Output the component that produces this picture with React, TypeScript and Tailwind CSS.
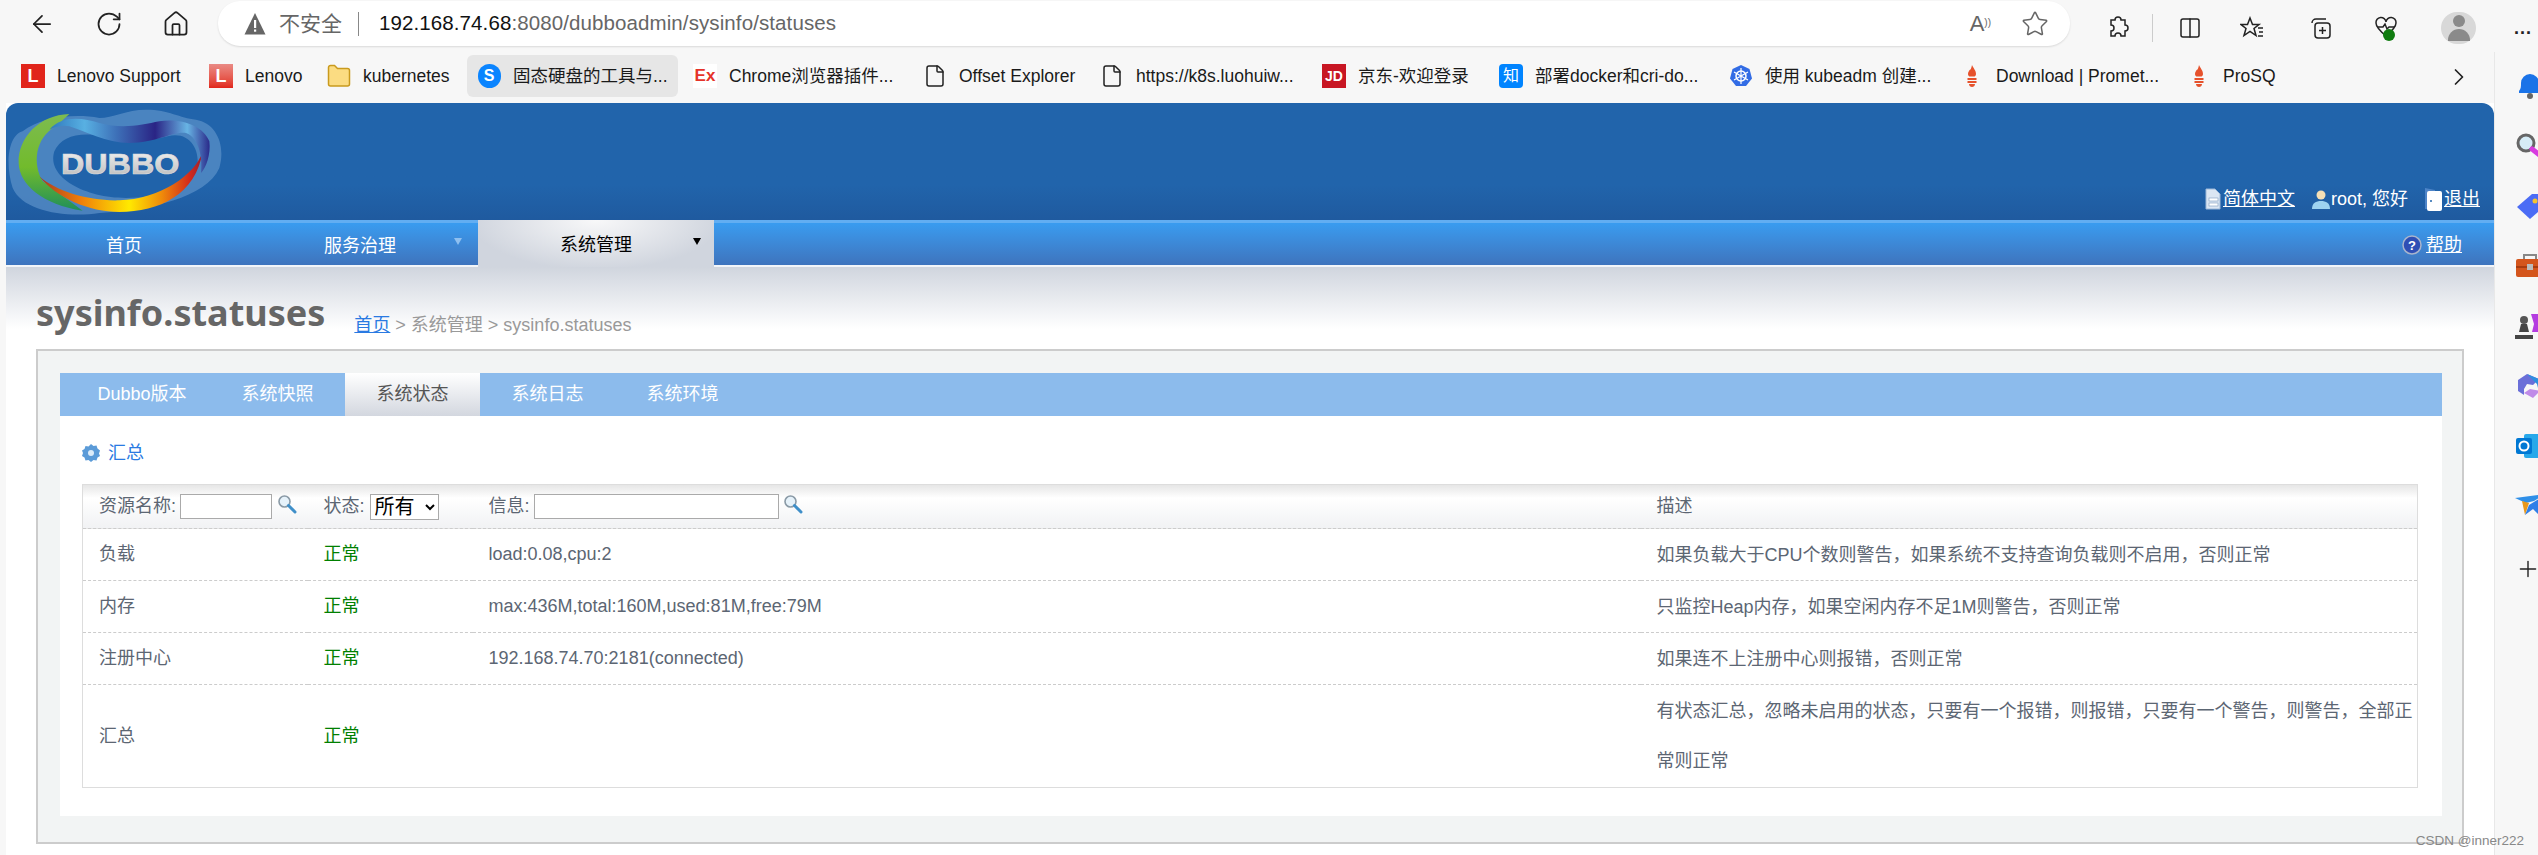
import React from 'react';
import { ArrowLeft, RotateCw, Home, Star, ChevronRight, File, Plus, Columns2 } from 'lucide-react';

const FireIcon = () => (
  <svg viewBox="0 0 16 24" className="h-[24px] w-[16px]">
    <path d="M8 1c1 3 4 5 4 9 0 1-.6 2-1.4 2.6H5.4C4.600 12 4 11 4 10c0-2 1-2.500 1.500-4C6.500 6 7.500 4 8 1z" fill="#e6522c" />
    <rect x="3.500" y="14" width="9" height="2" fill="#e6522c" />
    <rect x="3.500" y="17" width="9" height="2" fill="#e6522c" />
    <path d="M5 20h6c0 2-1.500 3-3 3s-3-1-3-3z" fill="#e6522c" />
  </svg>
);

const bookmarks = [
  {
    w: 'w-[183px]',
    label: 'Lenovo Support',
    icon: <div className="flex h-[24px] w-[24px] items-center justify-center bg-[#e1251b] text-[18px] font-bold text-white">L</div>,
  },
  {
    w: 'w-[113px]',
    label: 'Lenovo',
    icon: <div className="flex h-[24px] w-[24px] items-center justify-center bg-gradient-to-b from-[#e98a85] to-[#e1251b] text-[18px] font-bold text-white">L</div>,
  },
  {
    w: 'w-[145px]',
    label: 'kubernetes',
    icon: (
      <svg viewBox="0 0 24 24" className="h-[24px] w-[24px]">
        <path d="M1.500 20V3.500a2 2 0 0 1 2-2h4l3 3h10a2 2 0 0 1 2 2V20a2 2 0 0 1-2 2h-17a2 2 0 0 1-2-2z" fill="#fbdc82" stroke="#c99a1e" strokeWidth="1.500" />
      </svg>
    ),
  },
  {
    w: 'w-[211px]',
    label: '固态硬盘的工具与...',
    active: true,
    icon: <div className="flex h-[24px] w-[23px] items-center justify-center rounded-full bg-[#0a84ff] text-[16px] font-bold text-white">S</div>,
  },
  {
    w: 'w-[225px]',
    label: 'Chrome浏览器插件...',
    icon: <div className="flex h-[24px] w-[24px] items-center justify-center bg-[#fff] text-[17px] font-bold text-[#e5332a]">Ex</div>,
  },
  { w: 'w-[172px]', label: 'Offset Explorer', icon: <File size={24} strokeWidth={1.5} className="text-[#222]" /> },
  { w: 'w-[217px]', label: 'https://k8s.luohuiw...', icon: <File size={24} strokeWidth={1.5} className="text-[#222]" /> },
  {
    w: 'w-[172px]',
    label: '京东-欢迎登录',
    icon: <div className="flex h-[24px] w-[24px] items-center justify-center bg-[#c81623] text-[14px] font-bold text-white">JD</div>,
  },
  {
    w: 'w-[225px]',
    label: '部署docker和cri-do...',
    icon: <div className="flex h-[24px] w-[24px] items-center justify-center rounded-[4px] bg-[#0084ff] text-[16px] text-white">知</div>,
  },
  {
    w: 'w-[226px]',
    label: '使用 kubeadm 创建...',
    icon: (
      <svg viewBox="0 0 24 24" className="h-[24px] w-[24px]">
        <path d="M12 1l8.500 4 2.500 9.500-6 7.500H7l-6-7.500L3.500 5z" fill="#326ce5" />
        <circle cx="12" cy="12" r="5" fill="none" stroke="#fff" strokeWidth="1.500" />
        <path d="M12 4v16M5 8l14 8M19 8L5 16" stroke="#fff" strokeWidth="1.200" />
      </svg>
    ),
  },
  { w: 'w-[222px]', label: 'Download | Promet...', icon: <FireIcon /> },
  { w: 'w-[100px]', label: 'ProSQ', icon: <FireIcon /> },
];

const SearchIcon = () => (
  <svg viewBox="0 0 20 20" className="h-[20px] w-[20px]">
    <circle cx="7.500" cy="7.500" r="5.500" fill="#e6f2fa" stroke="#8a9aa6" strokeWidth="1.600" />
    <path d="M11.500 11.500L18 18" stroke="#3f8fc9" strokeWidth="3" strokeLinecap="round" />
  </svg>
);

const rows = [
  { name: '负载', info: 'load:0.08,cpu:2', desc: '如果负载大于CPU个数则警告，如果系统不支持查询负载则不启用，否则正常', h: 'h-[52px]' },
  { name: '内存', info: 'max:436M,total:160M,used:81M,free:79M', desc: '只监控Heap内存，如果空闲内存不足1M则警告，否则正常', h: 'h-[52px]' },
  { name: '注册中心', info: '192.168.74.70:2181(connected)', desc: '如果连不上注册中心则报错，否则正常', h: 'h-[52px]' },
  { name: '汇总', info: '', desc: '有状态汇总，忽略未启用的状态，只要有一个报错，则报错，只要有一个警告，则警告，全部正常则正常', h: 'h-[103px]' },
];

const tabs = [
  { name: 'Dubbo版本', w: 'w-[150px] pl-[14px]' },
  { name: '系统快照', w: 'w-[135px]' },
  { name: '系统状态', w: 'w-[135px]', active: true },
  { name: '系统日志', w: 'w-[135px]' },
  { name: '系统环境', w: 'w-[135px]' },
];

function DubboLogo() {
  return (
    <svg viewBox="20 25 660 345" className="h-[115px] w-[220px] shrink-0">
      <defs>
        <linearGradient id="rainbow" x1="0" y1="0" x2="1" y2="0">
          <stop offset="0" stopColor="#a83a20" />
          <stop offset="0.25" stopColor="#ef7d0a" />
          <stop offset="0.55" stopColor="#ffe900" />
          <stop offset="0.75" stopColor="#ef8a0a" />
          <stop offset="0.92" stopColor="#d42a1c" />
          <stop offset="1" stopColor="#9a2030" />
        </linearGradient>
        <linearGradient id="green" x1="0" y1="0" x2="0" y2="1">
          <stop offset="0" stopColor="#7dbb50" />
          <stop offset="0.55" stopColor="#72bb2c" />
          <stop offset="1" stopColor="#1f8f5a" />
        </linearGradient>
        <linearGradient id="ribbon" x1="0" y1="0" x2="1" y2="0">
          <stop offset="0" stopColor="#2f78bd" />
          <stop offset="0.22" stopColor="#58b0e2" />
          <stop offset="0.42" stopColor="#3d70b8" />
          <stop offset="0.66" stopColor="#2a2485" />
          <stop offset="0.86" stopColor="#68b4e4" />
          <stop offset="1" stopColor="#2a2a8a" />
        </linearGradient>
        <linearGradient id="metal" x1="0" y1="0" x2="0" y2="1">
          <stop offset="0" stopColor="#f4f4f4" />
          <stop offset="1" stopColor="#b8b8b8" />
        </linearGradient>
      </defs>
      <path d="M70 110C30 120 15 200 40 280c30 70 160 90 260 75 150-10 320-45 360-135 20-70-10-135-70-145-50-5-80-30-150-30-60 0-100 25-140 25-80-15-180 0-230 40z" fill="#5d92c9" opacity="0.7" />
      <path d="M165 170c20-45 75-60 150-45 60 15 130 15 190 0 60-15 95 30 90 90-10 60-110 95-215 95-120 0-240-60-215-140z" fill="#2063aa" />
      <path d="M210 58C120 60 55 130 58 205c2 65 72 125 192 143L130 260c-30-50-25-130 40-165z" fill="url(#green)" />
      <path d="M120 245c50 65 150 107 240 107 120 0 230-52 250-182-20 70-130 145-250 147-90 3-190-27-240-72z" fill="url(#rainbow)" />
      <path d="M150 105c40-45 100-35 150-20 70 20 130 5 180-5 60-10 130 10 150 60 5 40-10 80-25 95 5-45-5-105-45-120-40-5-90 30-170 30-70 0-130-35-180-50-20-5-40 0-60 10z" fill="url(#ribbon)" />
      <text x="185" y="238" fontSize="86" fontWeight="700" fill="url(#metal)" stroke="#dcdcdc" strokeWidth="2" textLength="355" lengthAdjust="spacingAndGlyphs">DUBBO</text>
    </svg>
  );
}

function BrowserToolbar() {
  return (
    <div className="flex h-[52px] items-start bg-[#f7f7f7]">
      <div className="ml-[28px] mt-[10px] flex gap-[39px] text-[#222]">
        <ArrowLeft size={28} strokeWidth={1.5} />
        <RotateCw size={28} strokeWidth={1.5} />
        <Home size={28} strokeWidth={1.5} />
      </div>
      <div className="ml-[28px] mt-px flex h-[45px] w-[1852px] items-center rounded-[22px] bg-white pl-[26px] pr-[21px] shadow-[0_1px_2px_rgba(0,0,0,0.12)]">
        <svg viewBox="0 0 22 24" className="h-[24px] w-[22px]">
          <path d="M11 1l10.500 21.500h-21z" fill="#666" />
          <rect x="10" y="8" width="2.200" height="8" fill="#fff" />
          <rect x="10" y="17.500" width="2.200" height="2.200" fill="#fff" />
        </svg>
        <span className="ml-[13px] text-[21px] text-[#666]">不安全</span>
        <div className="ml-[16px] h-[24px] w-px bg-[#888]" />
        <div className="ml-[20px] text-[20.500px] tracking-[0.1px]">
          <span className="text-[#111]">192.168.74.68</span>
          <span className="text-[#666]">:8080/dubboadmin/sysinfo/statuses</span>
        </div>
        <div className="ml-auto flex items-center gap-[30px] text-[#666]">
          <span className="text-[22px]">A<sup className="text-[10px]">))</sup></span>
          <Star size={28} strokeWidth={1.3} />
        </div>
      </div>
      <div className="mt-[12px] flex items-center text-[#222]">
        <svg viewBox="0 0 24 24" className="ml-[36px] h-[24px] w-[24px]" fill="none" stroke="currentColor" strokeWidth="1.500">
          <path d="M9 4a3 3 0 0 1 6 0h4v5a3 3 0 0 1 0 6v5h-4a3 3 0 0 0-6 0H5v-5a3 3 0 0 0 0-6V4z" />
        </svg>
        <div className="ml-[22px] h-[28px] w-px bg-[#ccc]" />
        <Columns2 size={24} strokeWidth={1.5} className="ml-[25px]" />
        <svg viewBox="0 0 24 24" className="ml-[38px] h-[24px] w-[24px]" fill="none" stroke="currentColor" strokeWidth="1.500">
          <path d="M10 2l2.500 6.500H19l-5 4 2 7-6-4.200-6 4.200 2-7-5-4h6.500z" />
          <path d="M18 12h5M19 16h4M18 20h5" />
        </svg>
        <svg viewBox="0 0 24 24" className="ml-[45px] h-[24px] w-[24px]" fill="none" stroke="currentColor" strokeWidth="1.500">
          <path d="M3 7a4 4 0 0 1 4-4h10" />
          <rect x="6" y="7" width="15" height="15" rx="3" />
          <path d="M13.500 11v7M10 14.500h7" />
        </svg>
        <div className="relative ml-[41px] h-[26px] w-[24px]">
          <svg viewBox="0 0 24 24" className="h-[24px] w-[24px]" fill="none" stroke="currentColor" strokeWidth="1.500">
            <path d="M12 21C6 16 2 12 2 8a5 5 0 0 1 10-1 5 5 0 0 1 10 1c0 4-4 8-10 13z" />
            <path d="M4 12h5l2-3 2 5 2-2h5" />
          </svg>
          <div className="absolute bottom-0 right-[3px] h-[12px] w-[12px] rounded-full bg-[#107c10]" />
        </div>
        <div className="ml-[43px] flex h-[32px] w-[35px] flex-col items-center justify-center gap-[2px] rounded-full bg-[#d8d8d8]">
          <div className="h-[12px] w-[12px] rounded-full bg-[#8a8a8a]" />
          <div className="h-[12px] w-[22px] rounded-t-full bg-[#8a8a8a]" />
        </div>
        <span className="ml-[38px] text-[18px] font-bold leading-none tracking-[1px]">...</span>
      </div>
    </div>
  );
}

function BookmarkBar() {
  return (
    <div className="flex h-[51px] items-start bg-[#f7f7f7] pl-[11px] pt-[3px]">
      <div className="flex gap-[5px]">
        {bookmarks.map((b) => (
          <div
            key={b.label}
            className={`flex h-[42px] items-center gap-[12px] rounded-[6px] pl-[10px] ${b.w} ${b.active ? 'bg-[#e6e6e6]' : ''}`}
          >
            <div className="flex w-[24px] shrink-0 justify-center">{b.icon}</div>
            <span className="whitespace-nowrap text-[17.500px] text-[#1a1a1a]">{b.label}</span>
          </div>
        ))}
      </div>
      <ChevronRight size={28} strokeWidth={1.5} className="ml-[168px] mt-[8px] text-[#222]" />
    </div>
  );
}

function SideBar() {
  return (
    <div className="flex w-[44px] shrink-0 flex-col gap-[34px] overflow-hidden border-l border-[#e8e8e8] bg-[#f7f7f7] pl-[20px] pt-[21px]">
      <svg viewBox="0 0 30 26" className="h-[26px] w-[30px] shrink-0">
        <path d="M4 18c2-2 2-5 2-8a9 9 0 0 1 18 0c0 3 0 6 2 8v2H4z" fill="#1a73e8" />
        <circle cx="15" cy="23" r="3" fill="#666" />
      </svg>
      <svg viewBox="0 0 30 26" className="h-[26px] w-[30px] shrink-0">
        <circle cx="11" cy="10" r="8" fill="#d6ecf7" stroke="#666" strokeWidth="3" />
        <path d="M17 16l10 8" stroke="#d83be0" strokeWidth="5" strokeLinecap="round" />
      </svg>
      <svg viewBox="0 0 30 26" className="h-[26px] w-[30px] shrink-0">
        <path d="M2 14L17 1h13v12L15 26z" fill="#4b6cf5" />
        <circle cx="20" cy="8" r="2.500" fill="#f4c430" />
      </svg>
      <svg viewBox="0 0 30 26" className="h-[26px] w-[30px] shrink-0">
        <path d="M9 6V2h12v4" fill="none" stroke="#888" strokeWidth="2" />
        <rect x="1" y="6" width="29" height="18" rx="2" fill="#d4551c" />
        <rect x="1" y="13" width="29" height="2" fill="#a83c10" />
        <rect x="12" y="11" width="6" height="6" fill="#bbb" />
      </svg>
      <svg viewBox="0 0 30 26" className="h-[26px] w-[30px] shrink-0">
        <path d="M16 1h14v18H17l2-8z" fill="#b43be0" />
        <circle cx="9" cy="7" r="4" fill="#555" />
        <path d="M6 11h6l2 8H4zM0 22h18v4H0z" fill="#444" />
      </svg>
      <svg viewBox="0 0 30 26" className="h-[26px] w-[30px] shrink-0">
        <path d="M3 7l9-6 12 5-6 6-6-1-3 5v6L3 18z" fill="#6a6fd8" />
        <path d="M12 1l14 6 3 10-5 2-2-8z" fill="#2d8fe0" />
        <path d="M9 20l6-4 10 2-7 7z" fill="#c08be8" />
      </svg>
      <svg viewBox="0 0 30 26" className="h-[26px] w-[30px] shrink-0">
        <rect x="9" y="1" width="21" height="24" rx="2" fill="#28a8ea" />
        <rect x="1" y="5" width="16" height="16" rx="2" fill="#0078d4" />
        <circle cx="9" cy="13" r="4.500" fill="none" stroke="#fff" strokeWidth="2" />
      </svg>
      <svg viewBox="0 0 30 26" className="h-[26px] w-[30px] shrink-0">
        <path d="M0 5l30-4-11 7-8 2z" fill="#2f8fe8" />
        <path d="M7 8l7 2-4 12z" fill="#e8981c" />
        <path d="M14 12L30 2l-6 20-6-6-8 6z" fill="#2f7fe8" />
      </svg>
      <Plus size={26} strokeWidth={1.3} className="mt-[3px] shrink-0 text-[#222]" />
    </div>
  );
}

function DocIcon() {
  return (
    <svg viewBox="0 0 16 22" className="h-[22px] w-[16px]">
      <path d="M1 1h9l5 5v15H1z" fill="#dbe6f3" stroke="#9db8d8" />
      <rect x="4" y="10" width="9" height="3" fill="#fff" stroke="#7d9cc0" strokeWidth="0.600" />
      <rect x="4" y="15" width="9" height="3" fill="#fff" stroke="#7d9cc0" strokeWidth="0.600" />
    </svg>
  );
}

function HeaderBar() {
  return (
    <div className="flex h-[117px] items-start rounded-t-[12px] bg-gradient-to-b from-[#2164ab] from-70% to-[#1f5a9f]">
      <DubboLogo />
      <div className="ml-auto flex items-center self-end pb-[9px] pr-[14px] text-[18px] leading-[24px] text-white">
        <DocIcon />
        <a href="#" className="ml-[2px] underline">简体中文</a>
        <svg viewBox="0 0 18 20" className="ml-[17px] h-[20px] w-[18px]">
          <circle cx="9" cy="6" r="4.500" fill="#f5dfb5" />
          <path d="M0 20c0-6 4-8 9-8s9 2 9 8z" fill="#9dd2f0" />
        </svg>
        <span className="ml-[1px]">root, 您好</span>
        <svg viewBox="0 0 18 24" className="ml-[16px] h-[24px] w-[18px]">
          <path d="M1 1l10 2v2H4v17H1z" fill="#4d84c8" />
          <rect x="3" y="4" width="15" height="20" rx="2" fill="#fff" />
          <circle cx="7" cy="14" r="1" fill="#2164ab" />
        </svg>
        <a href="#" className="ml-[2px] underline">退出</a>
      </div>
    </div>
  );
}

function NavBar() {
  return (
    <div className="flex h-[47px] items-stretch border-b-2 border-t-[3px] border-b-[#f2f5f9] border-t-[#62aef2] bg-gradient-to-b from-[#399cf0] to-[#3e74bd] text-[18px] text-white">
      <div className="flex w-[236px] items-center justify-center pt-[4px]">首页</div>
      <div className="relative flex w-[236px] items-center justify-center pt-[4px]">
        服务治理
        <span className="absolute right-[16px] top-[15px] h-0 w-0 border-x-[4px] border-t-[7px] border-x-transparent border-t-[#8fc0f0]" />
      </div>
      <div className="relative -mb-[2px] -mt-[3px] flex w-[236px] items-center justify-center bg-[radial-gradient(ellipse_at_50%_0%,#f8f8f9,#d0d5de_75%)] pt-[4px] text-black">
        系统管理
        <span className="absolute right-[13px] top-[18px] h-0 w-0 border-x-[4px] border-t-[7px] border-x-transparent border-t-black" />
      </div>
      <div className="ml-auto flex items-center pr-[32px] pt-[2px]">
        <svg viewBox="0 0 20 20" className="h-[20px] w-[20px]">
          <circle cx="10" cy="10" r="9" fill="#2f4fb5" stroke="#a8b4cc" strokeWidth="1.500" />
          <text x="10" y="15" textAnchor="middle" fontSize="13" fontWeight="700" fill="#fff">?</text>
        </svg>
        <a href="#" className="ml-[4px] underline">帮助</a>
      </div>
    </div>
  );
}

function StatusTable() {
  return (
    <table className="w-full table-fixed border-collapse border border-[#ddd] text-[18px] text-[#5c6673]">
      <colgroup>
        <col className="w-[225px]" />
        <col className="w-[165px]" />
        <col className="w-[1168px]" />
        <col />
      </colgroup>
      <thead>
        <tr className="h-[44px] border-b border-dashed border-b-[#ccc] bg-[linear-gradient(#e6e6e6,#ffffff_30%,#f1f2f4)] font-normal">
          <th className="pl-[16px] text-left font-normal">
            <div className="flex items-center">
              <span>资源名称:</span>
              <input className="ml-[4px] h-[25px] w-[92px] border border-[#aaa] bg-white" />
              <span className="-mt-[6px] ml-[5px]"><SearchIcon /></span>
            </div>
          </th>
          <th className="pl-[16px] text-left font-normal">
            <div className="flex items-center">
              <span>状态:</span>
              <select className="ml-[5px] h-[26px] w-[69px] border border-[#aaa] bg-white text-[20px] text-black">
                <option>所有</option>
              </select>
            </div>
          </th>
          <th className="pl-[16px] text-left font-normal">
            <div className="flex items-center">
              <span>信息:</span>
              <input className="ml-[4px] h-[25px] w-[245px] border border-[#aaa] bg-white" />
              <span className="-mt-[6px] ml-[4px]"><SearchIcon /></span>
            </div>
          </th>
          <th className="pl-[16px] text-left font-normal">描述</th>
        </tr>
      </thead>
      <tbody>
        {rows.map((r, i) => (
          <tr key={r.name} className={`${r.h} ${i < rows.length - 1 ? 'border-b border-dashed border-b-[#ccc]' : ''}`}>
            <td className="pl-[16px]">{r.name}</td>
            <td className="pl-[16px] text-[#008000]">正常</td>
            <td className="pl-[16px]">{r.info}</td>
            <td className="pl-[16px] pr-[2px] leading-[50px]">{r.desc}</td>
          </tr>
        ))}
      </tbody>
    </table>
  );
}

function PageBody() {
  return (
    <div className="flex-1 bg-[linear-gradient(#d0d5de,#ffffff_62px)] pl-[30px] pr-[30px]">
      <div className="flex h-[82px] items-start">
        <h1 className="mt-[22px] text-[36px] font-bold leading-[48px] text-[#666] font-['Noto_Sans','Noto_Sans_CJK_SC',sans-serif]">sysinfo.statuses</h1>
        <div className="ml-[29px] mt-[46px] text-[18px] leading-[24px] text-[#999]">
          <a href="#" className="text-[#2a7ae2] underline">首页</a> &gt; 系统管理 &gt; sysinfo.statuses
        </div>
      </div>
      <div className="border-2 border-[#ccc] bg-[#f2f4f4] pb-[26px] pl-[22px] pr-[20px] pt-[22px]">
        <div className="flex h-[43px] items-stretch bg-[#8cbbec] text-[18px] text-white">
          {tabs.map((t) => (
            <div
              key={t.name}
              className={`flex items-center justify-center ${t.w} ${t.active ? 'bg-gradient-to-b from-white to-[#d3d7df] text-[#555]' : ''}`}
            >
              {t.name}
            </div>
          ))}
        </div>
        <div className="bg-white pb-[28px] pl-[22px] pr-[24px] pt-[23px]">
          <div className="flex h-[28px] items-center text-[18px] text-[#2a7ae2]">
            <svg viewBox="0 0 18 18" className="h-[18px] w-[18px]">
              <path d="M9 0l2.500 2 3-.5 1 3 2.500 2-1 3 1 2.500-2.500 1.500-1 3-3-.5L9 18l-2.500-2-3 .5-1-3L0 12l1-3-1-2.500L2.500 5l1-3 3 .5z" fill="#5b9bd8" />
              <circle cx="9" cy="9" r="3" fill="#dcecf9" />
            </svg>
            <span className="ml-[8px]">汇总</span>
          </div>
          <div className="mt-[17px]">
            <StatusTable />
          </div>
        </div>
      </div>
    </div>
  );
}

export default function App() {
  return (
    <div className="relative flex h-[855px] w-[2538px] flex-col overflow-hidden bg-[#f7f7f7] font-['Liberation_Sans','Noto_Sans_CJK_SC',sans-serif]">
      <BrowserToolbar />
      <div className="flex min-h-0 flex-1">
        <div className="flex min-w-0 flex-1 flex-col">
          <BookmarkBar />
          <div className="ml-[6px] flex flex-1 flex-col bg-white">
            <HeaderBar />
            <NavBar />
            <PageBody />
          </div>
        </div>
        <SideBar />
      </div>
      <div className="absolute bottom-[4px] right-[14px] text-[13.500px] text-[#888]">CSDN @inner222</div>
    </div>
  );
}
